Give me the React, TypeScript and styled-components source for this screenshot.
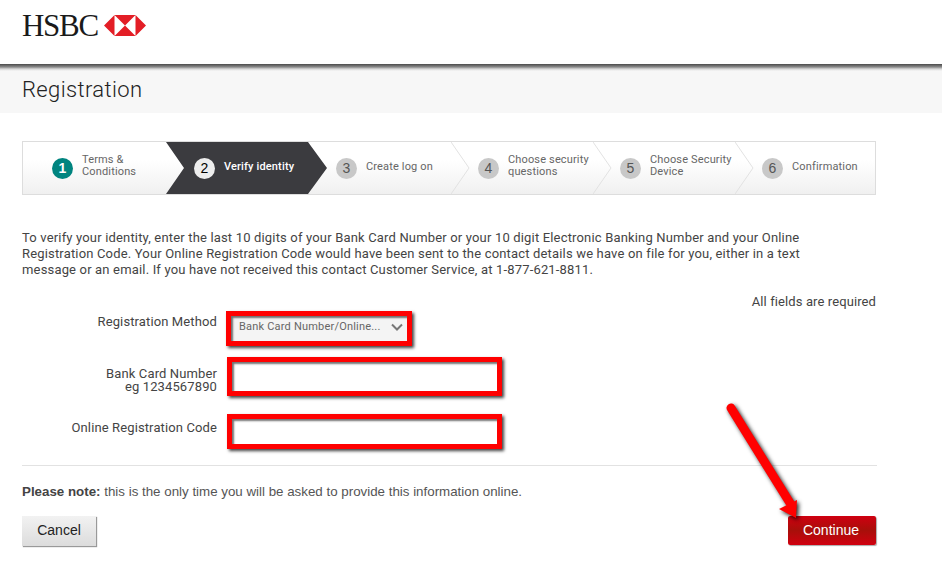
import React from 'react';
import styled, { createGlobalStyle } from 'styled-components';

const GlobalStyle = createGlobalStyle`
  html, body {
    margin: 0;
    padding: 0;
    background: #fff;
    font-family: Roboto, "Liberation Sans", sans-serif;
    color: #444;
  }
`;

const Page = styled.div`
  position: relative;
  width: 942px;
  height: 573px;
  overflow: hidden;
`;

const Header = styled.header`
  height: 64px;
  box-sizing: border-box;
  padding: 9px 22px 0;
  display: flex;
  align-items: flex-start;
  gap: 6px;
`;

const Wordmark = styled.span`
  font-family: "Liberation Serif", serif;
  font-size: 31px;
  line-height: 33px;
  letter-spacing: -1.3px;
  color: #1a1a1a;
`;

const Logo = styled.svg`
  margin-top: 6px;
`;

const TitleBar = styled.div`
  height: 49px;
  box-sizing: border-box;
  padding: 11px 22px 0;
  background: linear-gradient(#4a4a4a 0, #8a8a8a 3px, #d8d8d8 5px, #f7f7f7 7px);
`;

const Title = styled.h1`
  margin: 0;
  font-size: 22px;
  line-height: 30px;
  font-weight: 300;
  letter-spacing: 0.37px;
  color: #222;
`;

const Content = styled.main`
  padding: 28px 66px 0 22px;
`;

const Steps = styled.ol`
  list-style: none;
  margin: 0;
  padding: 0;
  height: 54px;
  box-sizing: border-box;
  border: 1px solid #ddd;
  display: grid;
  grid-template-columns: 143px 142px 143px 142px 142px 1fr;
  background: linear-gradient(#fff 35%, #f0f0f0);
  overflow: hidden;
`;

const Step = styled.li<{ $active?: boolean; $inset: number }>`
  position: relative;
  display: flex;
  align-items: center;
  gap: 9px;
  padding-left: ${(p) => p.$inset}px;
  font-size: 11px;
  line-height: 12px;
  letter-spacing: 0.15px;
  color: ${(p) => (p.$active ? '#fff' : '#666')};
  font-weight: ${(p) => (p.$active ? 500 : 400)};

  &::before {
    content: ${(p) => (p.$active ? '""' : 'none')};
    position: absolute;
    top: 0;
    bottom: 0;
    left: 0;
    right: -19px;
    background: #3b3b3f;
    clip-path: polygon(0 0, calc(100% - 19px) 0, 100% 50%, calc(100% - 19px) 100%, 0 100%, 18px 50%);
  }
`;

const Circle = styled.span<{ $tone: 'done' | 'active' | 'todo' }>`
  position: relative;
  flex: none;
  width: 21px;
  height: 21px;
  border-radius: 50%;
  display: flex;
  align-items: center;
  justify-content: center;
  font-family: "Liberation Sans", sans-serif;
  font-size: 14px;
  font-weight: ${(p) => (p.$tone === 'done' ? 700 : 400)};
  background: ${(p) => (p.$tone === 'done' ? '#00847f' : p.$tone === 'active' ? '#ededed' : '#c8c8c8')};
  color: ${(p) => (p.$tone === 'done' ? '#fff' : p.$tone === 'active' ? '#000' : '#555')};
`;

const StepLabel = styled.span<{ $lift: number }>`
  position: relative;
  margin-top: ${(p) => p.$lift}px;
  white-space: pre-line;
`;

const Chevron = styled.svg`
  position: absolute;
  top: 0;
  right: -19px;
  z-index: 1;
`;

const Intro = styled.p`
  margin: 35px 0 0;
  font-size: 13px;
  line-height: 16px;
  letter-spacing: 0.17px;
  color: #444;
  white-space: pre-line;
`;

const Required = styled.div`
  margin-top: 16px;
  text-align: right;
  font-size: 13px;
  line-height: 16px;
  letter-spacing: 0.1px;
`;

const Form = styled.form`
  margin-top: 1px;
`;

const Row = styled.div<{ $gap: number }>`
  display: grid;
  grid-template-columns: 195px auto;
  justify-content: start;
  column-gap: 10px;
  margin-top: ${(p) => p.$gap}px;
`;

const Label = styled.label<{ $top: number }>`
  padding-top: ${(p) => p.$top}px;
  text-align: right;
  font-size: 13px;
  line-height: 13px;
  letter-spacing: 0.12px;
  color: #444;
  white-space: pre-line;
`;

const Marked = `
  box-sizing: border-box;
  border: 5px solid #f00;
  box-shadow: 2px 2px 3px rgba(0, 0, 0, 0.75), inset 2px 2px 2px rgba(0, 0, 0, 0.55);
`;

const Select = styled.div`
  ${Marked}
  margin-left: -1px;
  width: 186px;
  height: 35px;
  display: flex;
  align-items: center;
  justify-content: space-between;
  padding: 0 3px 4px 8px;
  font-size: 11px;
  letter-spacing: 0.2px;
  color: #666;
  background: #f4f4f4;
`;

const TextInput = styled.input`
  ${Marked}
  display: block;
  width: 275px;
  height: 39px;
  outline: none;
  background: #fff;
`;

const ShortInput = styled(TextInput)`
  height: 35px;
`;

const Divider = styled.hr`
  margin: 16px -1px 0 0;
  border: none;
  border-top: 1px solid #e2e2e2;
`;

const Note = styled.p`
  margin: 18px 0 0;
  font-size: 13.33px;
  line-height: 16px;
  font-family: "Liberation Sans", sans-serif;
  color: #555;

  strong {
    color: #444;
  }
`;

const Actions = styled.div`
  margin-top: 16px;
  display: flex;
  justify-content: space-between;
  align-items: flex-start;
`;

const CancelButton = styled.button`
  width: 74px;
  height: 30px;
  padding: 0 0 2px;
  border: none;
  font-family: "Liberation Sans", sans-serif;
  font-size: 14px;
  color: #222;
  background: linear-gradient(#f2f2f2, #dcdcdc);
  box-shadow: 1px 1px 1px #999;
`;

const ContinueButton = styled.button`
  width: 88px;
  height: 29px;
  padding: 0 2px 2px 0;
  border: none;
  border-radius: 2px;
  font-family: "Liberation Sans", sans-serif;
  font-size: 14px;
  color: #fff;
  background: linear-gradient(#cf0010, #a80f0a 50%, #d0000f);
  box-shadow: 1px 1px 1px #aaa;
`;

const Arrow = styled.svg`
  position: absolute;
  left: 720px;
  top: 395px;
  overflow: visible;
  filter: drop-shadow(2px 2px 2px rgba(0, 0, 0, 0.85));
`;

const steps = [
  { label: 'Terms &\nConditions', tone: 'done' as const, inset: 29 },
  { label: 'Verify identity', tone: 'active' as const, inset: 28 },
  { label: 'Create log on', tone: 'todo' as const, inset: 28 },
  { label: 'Choose security\nquestions', tone: 'todo' as const, inset: 27 },
  { label: 'Choose Security\nDevice', tone: 'todo' as const, inset: 27 },
  { label: 'Confirmation', tone: 'todo' as const, inset: 27 },
];

const introText =
  'To verify your identity, enter the last 10 digits of your Bank Card Number or your 10 digit Electronic Banking Number and your Online\n' +
  'Registration Code. Your Online Registration Code would have been sent to the contact details we have on file for you, either in a text\n' +
  'message or an email. If you have not received this contact Customer Service, at 1-877-621-8811.';

const App: React.FC = () => (
  <Page>
    <GlobalStyle />
    <Header>
      <Wordmark>HSBC</Wordmark>
      <Logo width="42" height="21" viewBox="0 0 42 21">
        <path fill="#e31e26" d="M0 10.5 10.5 0v21zM42 10.5 31.5 0v21zM10.5 0h21L21 10.5zM10.5 21h21L21 10.5z" />
      </Logo>
    </Header>
    <TitleBar>
      <Title>Registration</Title>
    </TitleBar>
    <Content>
      <Steps>
        {steps.map((step, i) => (
          <Step key={step.label} $active={step.tone === 'active'} $inset={step.inset}>
            <Circle $tone={step.tone}>{i + 1}</Circle>
            <StepLabel $lift={step.label.includes('\n') ? -4 : -2}>{step.label}</StepLabel>
            {i >= 2 && i < 5 && (
              <Chevron width="19" height="52" viewBox="0 0 19 52">
                <path d="M0 0 18 26 0 52" fill="none" stroke="#e2e2e2" />
              </Chevron>
            )}
          </Step>
        ))}
      </Steps>
      <Intro>{introText}</Intro>
      <Required>All fields are required</Required>
      <Form>
        <Row $gap={0}>
          <Label $top={4}>Registration Method</Label>
          <Select>
            Bank Card Number/Online...
            <svg width="14" height="14" viewBox="0 0 14 14">
              <path d="M2 4.5 7 9.5 12 4.5" fill="none" stroke="#777" strokeWidth="2" />
            </svg>
          </Select>
        </Row>
        <Row $gap={11}>
          <Label $top={10}>{'Bank Card Number\neg 1234567890'}</Label>
          <TextInput />
        </Row>
        <Row $gap={18}>
          <Label $top={7}>Online Registration Code</Label>
          <ShortInput />
        </Row>
      </Form>
      <Divider />
      <Note>
        <strong>Please note:</strong> this is the only time you will be asked to provide this information online.
      </Note>
      <Actions>
        <CancelButton type="button">Cancel</CancelButton>
        <ContinueButton type="button">Continue</ContinueButton>
      </Actions>
    </Content>
    <Arrow width="80" height="125" viewBox="0 0 80 125">
      <path d="M11 13 70 108" stroke="#f00" strokeWidth="9" strokeLinecap="round" fill="none" />
      <path d="M59 114 77 105 76 123z" fill="#f00" />
    </Arrow>
  </Page>
);

export default App;
